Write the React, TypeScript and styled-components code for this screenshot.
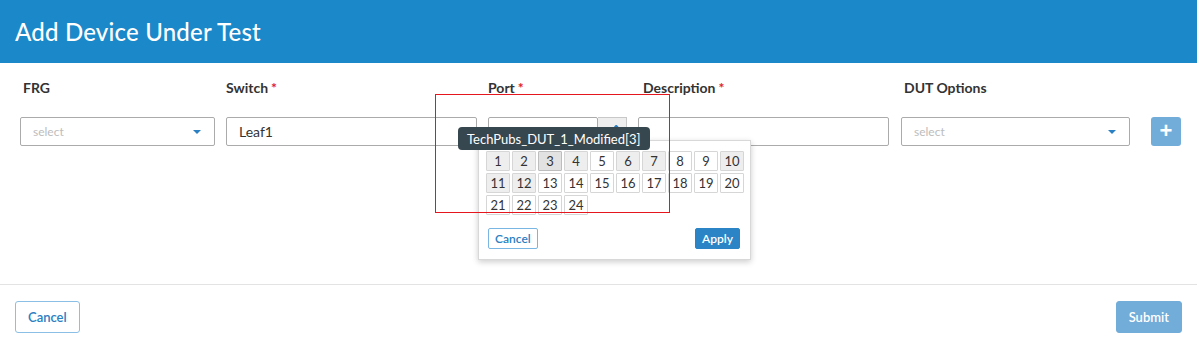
import styled, { createGlobalStyle } from "styled-components";
import { FaPencilAlt } from "react-icons/fa";

const GlobalStyle = createGlobalStyle`
  body {
    margin: 0;
    font-family: "Lato", "Noto Sans", sans-serif;
    background: #fff;
    color: #333;
  }
`;

const Page = styled.div`
  width: 1197px;
  height: 339px;
  display: flex;
  flex-direction: column;
`;

const Header = styled.div`
  height: 63px;
  background-color: #1b88c9;
  display: flex;
  align-items: center;
  padding: 0 15px;
  box-sizing: border-box;
`;

const Title = styled.h1`
  margin: 0;
  font-size: 24px;
  font-weight: 500;
  color: #fff;
  letter-spacing: 0.2px;
`;

const Body = styled.div`
  height: 222px;
  box-sizing: border-box;
  padding: 17px 15px 0 20px;
  border-bottom: 1px solid #e3e3e3;
`;

const FieldRow = styled.div`
  display: flex;
  gap: 11px;
  align-items: flex-end;
`;

const Field = styled.div<{ $width: number; $shift?: number }>`
  width: ${(p) => p.$width}px;
  margin-left: ${(p) => p.$shift || 0}px;
  display: flex;
  flex-direction: column;
`;

const Label = styled.label<{ $indent: number }>`
  font-size: 14px;
  font-weight: 700;
  color: #333;
  height: 16px;
  line-height: 16px;
  margin-bottom: 21px;
  padding-left: ${(p) => p.$indent}px;
`;

const Req = styled.span`
  color: #e0202a;
  margin-left: 3px;
`;

const SelectBox = styled.div`
  height: 29px;
  box-sizing: border-box;
  border: 1px solid #ababab;
  border-radius: 2px;
  display: flex;
  align-items: center;
  justify-content: space-between;
  padding: 0 13px 0 12px;
  font-size: 12px;
  color: #bdbdbd;
`;

const Caret = styled.span`
  width: 0;
  height: 0;
  border-left: 4px solid transparent;
  border-right: 4px solid transparent;
  border-top: 4px solid #2a80c2;
`;

const TextBox = styled.div`
  height: 29px;
  box-sizing: border-box;
  border: 1px solid #ababab;
  border-radius: 2px;
  display: flex;
  align-items: center;
  padding: 0 12px;
  font-size: 14px;
  color: #333;
  flex: 1;
`;

const InputGroup = styled.div`
  position: relative;
  display: flex;
  height: 29px;
`;

const Addon = styled.div`
  width: 29px;
  box-sizing: border-box;
  border: 1px solid #c8c8c8;
  border-left: none;
  background: #eeeeee;
  display: flex;
  align-items: center;
  justify-content: center;
  color: #2a80c2;
  font-size: 13px;
`;

const PlusButton = styled.button`
  width: 30px;
  height: 29px;
  margin-left: 10px;
  border: none;
  border-radius: 3px;
  background: #72acd9;
  color: #fff;
  font-size: 22px;
  line-height: 1;
  font-weight: 700;
  display: flex;
  align-items: center;
  justify-content: center;
  padding: 0 0 2px;
`;

const Popover = styled.div`
  position: absolute;
  left: -10px;
  top: 23px;
  width: 273px;
  height: 120px;
  box-sizing: border-box;
  padding: 10px 8px 10px 7px;
  background: #fff;
  border: 1px solid #d8d8d8;
  box-shadow: 0 2px 6px rgba(0, 0, 0, 0.2);
  display: flex;
  flex-direction: column;
  z-index: 2;
`;

const PortGrid = styled.div`
  display: grid;
  grid-template-columns: repeat(10, 24px);
  grid-auto-rows: 20px;
  gap: 2px;
`;

const PortCell = styled.div<{ $used?: boolean; $active?: boolean }>`
  box-sizing: border-box;
  border: 1px solid ${(p) => (p.$active ? "#bdbdbd" : "#d6d6d6")};
  background: ${(p) => (p.$active ? "#e2e2e2" : p.$used ? "#eeeeee" : "#fff")};
  border-radius: 1px;
  font-size: 13px;
  color: #333;
  display: flex;
  align-items: center;
  justify-content: center;
`;

const PopFooter = styled.div`
  margin-top: auto;
  display: flex;
  justify-content: space-between;
  padding: 0 2px 0 2px;
`;

const SmallButton = styled.button<{ $primary?: boolean }>`
  height: 21px;
  box-sizing: border-box;
  padding: 0 6px;
  font-family: inherit;
  font-size: 12px;
  font-weight: 600;
  border-radius: 2px;
  border: 1px solid ${(p) => (p.$primary ? "#2a84c6" : "#7ab6e4")};
  background: ${(p) => (p.$primary ? "#2a84c6" : "#fff")};
  color: ${(p) => (p.$primary ? "#fff" : "#2a80c2")};
`;

const Tooltip = styled.div`
  position: absolute;
  left: -30px;
  top: 10px;
  height: 23px;
  padding: 0 9px;
  box-sizing: border-box;
  background: #37474f;
  color: #fff;
  font-size: 13px;
  border-radius: 4px;
  display: flex;
  align-items: center;
  white-space: nowrap;
  z-index: 3;
`;

const Highlight = styled.div`
  position: absolute;
  left: -53px;
  top: -23px;
  width: 235px;
  height: 119px;
  box-sizing: border-box;
  border: 1px solid #e5161d;
  pointer-events: none;
  z-index: 4;
`;

const Footer = styled.div`
  flex: 1;
  display: flex;
  justify-content: space-between;
  align-items: flex-start;
  padding: 16px 15px 0;
`;

const FooterButton = styled.button<{ $primary?: boolean }>`
  height: 32px;
  box-sizing: border-box;
  padding: 0 12px;
  font-family: inherit;
  font-size: 13px;
  font-weight: 600;
  border-radius: 3px;
  border: 1px solid ${(p) => (p.$primary ? "#72acd9" : "#8cbfe6")};
  background: ${(p) => (p.$primary ? "#72acd9" : "#fff")};
  color: ${(p) => (p.$primary ? "#fff" : "#2a80c2")};
`;

const usedPorts = [1, 2, 4, 6, 7, 10, 11, 12];
const activePort = 3;
const ports = Array.from({ length: 24 }, (_, i) => i + 1);

export default function App() {
  return (
    <Page>
      <GlobalStyle />
      <Header>
        <Title>Add Device Under Test</Title>
      </Header>
      <Body>
        <FieldRow>
          <Field $width={195}>
            <Label $indent={3}>FRG</Label>
            <SelectBox>
              select
              <Caret />
            </SelectBox>
          </Field>
          <Field $width={251}>
            <Label $indent={0}>
              Switch<Req>*</Req>
            </Label>
            <InputGroup>
              <TextBox>Leaf1</TextBox>
            </InputGroup>
          </Field>
          <Field $width={139}>
            <Label $indent={-1}>
              Port<Req>*</Req>
            </Label>
            <InputGroup>
              <TextBox />
              <Addon>
                <FaPencilAlt />
              </Addon>
              <Tooltip>TechPubs_DUT_1_Modified[3]</Tooltip>
              <Popover>
                <PortGrid>
                  {ports.map((n) => (
                    <PortCell
                      key={n}
                      $used={usedPorts.includes(n)}
                      $active={n === activePort}
                    >
                      {n}
                    </PortCell>
                  ))}
                </PortGrid>
                <PopFooter>
                  <SmallButton>Cancel</SmallButton>
                  <SmallButton $primary>Apply</SmallButton>
                </PopFooter>
              </Popover>
              <Highlight />
            </InputGroup>
          </Field>
          <Field $width={251}>
            <Label $indent={5}>
              Description<Req>*</Req>
            </Label>
            <InputGroup>
              <TextBox />
            </InputGroup>
          </Field>
          <Field $width={229} $shift={1}>
            <Label $indent={3}>DUT Options</Label>
            <SelectBox>
              select
              <Caret />
            </SelectBox>
          </Field>
          <PlusButton>+</PlusButton>
        </FieldRow>
      </Body>
      <Footer>
        <FooterButton>Cancel</FooterButton>
        <FooterButton $primary>Submit</FooterButton>
      </Footer>
    </Page>
  );
}
